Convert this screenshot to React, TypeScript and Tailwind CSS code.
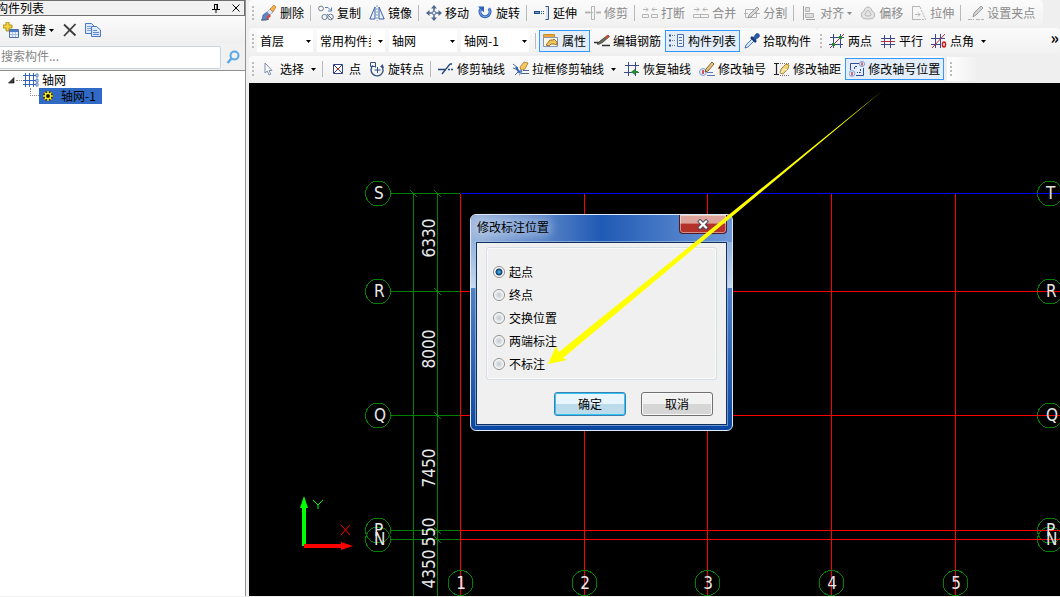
import { useState, type ReactNode } from "react";

/* ---------- icons (16 x 16) ---------- */

function Svg({ children, className = "" }: { children: ReactNode; className?: string }) {
  return (
    <svg viewBox="0 0 16 16" fill="none" aria-hidden="true" className={`size-4 shrink-0 ${className}`}>
      {children}
    </svg>
  );
}

const NAVY = "#3a4a86";
const STEEL = "#5a7fb5";
const GREY = "#b4b4b4";

const DeleteIcon = () => (
  <Svg>
    <path d="M0 15h5l3-1" stroke="#555" />
    <path d="M2 10l4-3 3 3-3 4-5 1z" fill="#5b86c8" stroke="#2c4f93" strokeWidth=".6" />
    <path d="M6 7l3-3 3 3-3 3z" fill="#d9e4f4" stroke="#7d8fae" strokeWidth=".6" />
    <path d="M9 4l4-4 2 2-3 5z" fill="#f2b04a" stroke="#b9661e" strokeWidth=".6" />
    <path d="M8 9l2 2-3 3-2-1z" fill="#d8473a" />
  </Svg>
);
const CopyObjIcon = () => (
  <Svg>
    <circle cx="3" cy="3.5" r="2.4" stroke="#6d7c94" />
    <circle cx="6.5" cy="12" r="2.6" stroke="#6d7c94" />
    <circle cx="12.5" cy="12" r="2.8" stroke="#6d7c94" />
    <path d="M7 2.5h3l3 3M13.500 2.500v3.500h-3.500M9 9l5 5" stroke={STEEL} />
  </Svg>
);
const MirrorIcon = () => (
  <Svg>
    <path d="M6 2v12H.8zM10 2v12h5.200z" fill="#e8f0fb" stroke="#3f62a5" />
    <path d="M8 0v16" stroke="#7d9ac9" strokeDasharray="2 1" />
  </Svg>
);
const MoveIcon = () => (
  <Svg>
    <path d="M8 2v12M2 8h12" stroke="#4d6790" strokeWidth="1.500" />
    <path d="M8 0l3 3.500H5zM8 16l3-3.500H5zM0 8l3.500-3v6zM16 8l-3.500-3v6z" fill="#4d6790" />
    <path d="M6.500 6.500h3v3h-3z" fill="#dfe8f5" stroke="#4d6790" strokeWidth=".6" />
  </Svg>
);
const RotateIcon = () => (
  <Svg>
    <path d="M4.200 3.500a5 5 0 1 0 7.600 0" stroke="#2f62bb" strokeWidth="3" />
    <path d="M4.200 3.500a5 5 0 1 0 7.600 0" stroke="#7ea6e4" strokeWidth="1" />
    <path d="M1 1.500h6v6z" fill="#2f62bb" />
  </Svg>
);
const ExtendIcon = () => (
  <Svg>
    <path d="M0 7.500h6" stroke="#1f4a86" strokeWidth="3" />
    <path d="M1 7.500h4" stroke="#6f97d0" />
    <path d="M7 6.500h4M7 8.500h4" stroke="#1f4a86" strokeDasharray="1 1" />
    <path d="M11.500 1.500h3v13h-3" stroke="#33588f" />
    <path d="M13 2v12" stroke="#b9cdea" />
  </Svg>
);
const TrimIcon = () => (
  <Svg>
    <path d="M0 7.500h5M11 7.500h5" stroke={GREY} strokeWidth="2" />
    <path d="M6.500 1.500h3v13h-3z" stroke={GREY} />
    <path d="M5 7.500h6" stroke={GREY} strokeDasharray="1 1" />
  </Svg>
);
const BreakIcon = () => (
  <Svg>
    <path d="M1 4.500h5m-2-2l2 2-2 2M15 4.500h-5m2-2l-2 2 2 2" stroke={GREY} />
    <path d="M.5 9.500h6v3h-6zM9.500 9.500h6v3h-6z" stroke={GREY} />
  </Svg>
);
const JoinIcon = () => (
  <Svg>
    <path d="M1 4.500h5m-2-2l2 2-2 2M15 4.500h-5m2-2l-2 2 2 2" stroke={GREY} />
    <path d="M.5 9.500h15v3H.5zM7.500 9.500v3" stroke={GREY} />
  </Svg>
);
const SplitIcon = () => (
  <Svg>
    <path d="M1.500 4.500h11v8h-11zM0 8.500h4M9 8.500h7" stroke={GREY} />
    <path d="M4 13l1-3 8-8 2 2-8 8z" fill="#d8d8d8" stroke="#9c9c9c" />
  </Svg>
);
const AlignIcon = () => (
  <Svg>
    <path d="M2.500 1v14M5 14.500h9" stroke="#9c9c9c" />
    <path d="M4.500 2.500h4v4h-4zM4.500 8.500h8v4h-8z" fill="#dedede" stroke={GREY} />
  </Svg>
);
const OffsetIcon = () => (
  <Svg>
    <path d="M8 2c3 0 3.500 3 4 4 2 1 3 2.500 2.500 5-.5 2.500-3 3-6.500 3s-6-.5-6.500-3C1 8.500 2 7 4 6c.5-1 1-4 4-4z" fill="#e4e4e4" stroke={GREY} />
    <path d="M8 5.500c1.500 0 2 2 2.500 3 1 .5 1 2.500-2.500 2.500S4.500 9 5.500 8.500c.5-1 1-3 2.500-3z" stroke={GREY} />
  </Svg>
);
const StretchIcon = () => (
  <Svg>
    <path d="M9 1.500H1.500v13H8" stroke={GREY} />
    <path d="M8 14.500h6.500L9 2" stroke={GREY} strokeDasharray="2 1" />
    <path d="M4 9.500h5m-2-2l2 2-2 2" stroke={GREY} />
  </Svg>
);
const GripPointIcon = () => (
  <Svg>
    <path d="M0 14.500h6M8 14.500h8" stroke={GREY} strokeDasharray="4 1" />
    <path d="M5 12l1-4 7-7 2 2-7 7z" fill="#d2d2d2" stroke="#9c9c9c" />
  </Svg>
);
const PropsIcon = () => (
  <Svg>
    <path d="M.5 1.500h11v3H.5z" fill="#fff" stroke="#c58c2a" />
    <path d="M1 2h10v2H1z" fill="#f0a637" />
    <path d="M.5 4.500h14v9H.5z" fill="#fdf7e6" stroke="#8296b5" />
    <path d="M3 12l4-5h3l1-1 3 3v3l-3-1H8l-2 2z" fill="#f1c658" stroke="#7c5a1b" strokeWidth=".8" />
  </Svg>
);
const EditRebarIcon = () => (
  <Svg>
    <path d="M0 9.500h5M8 12.500h8" stroke="#333" strokeWidth="1.300" />
    <path d="M3 11l3-3 8-6 1.500 1.500-7 6-4 2z" fill="#6b6a55" stroke="#333" strokeWidth=".7" />
    <path d="M11 4.500L14 2l1.500 1.500-3 2.500z" fill="#d44a34" />
  </Svg>
);
const ListIcon = () => (
  <Svg>
    <path d="M0 2.500h2M0 7.500h2M0 12.500h2" stroke="#2c4f93" strokeWidth="2" />
    <path d="M3 2.500h4M3 7.500h4M3 12.500h4" stroke="#777" strokeDasharray="1 1" />
    <path d="M8.500 1.500h6v12h-6z" fill="#eef3fb" stroke="#4b6fae" />
    <path d="M10 4.500h3M10 7.500h3M10 10.500h3" stroke="#4b6fae" />
  </Svg>
);
const PickIcon = () => (
  <Svg>
    <path d="M1 15l1-3 6-6 2 2-6 6z" fill="#dbe9fa" stroke="#4576b8" />
    <path d="M7 4l5 5" stroke="#173a78" strokeWidth="2.500" />
    <path d="M9 5l3-4c2-1.500 4.500 1 3 3l-4 3z" fill="#2c5cab" stroke="#173a78" strokeWidth=".7" />
  </Svg>
);
const TwoPointIcon = () => (
  <Svg>
    <path d="M4.500 1v14M11.500 1v14M1 4.500h14M0 11.500h14" stroke={NAVY} />
    <path d="M1 15L15 1" stroke="#b5283a" />
    <path d="M3 10h3v3H3zM10 3h3v3h-3z" fill="#2b8a2b" />
  </Svg>
);
const ParallelIcon = () => (
  <Svg>
    <path d="M4.500 2v13M10.500 2v13M1 11.500h14" stroke={NAVY} />
    <path d="M1 5.500h14" stroke={NAVY} />
    <path d="M1 8.500h14" stroke="#c02a3c" />
  </Svg>
);
const PointAngleIcon = () => (
  <Svg>
    <path d="M4.500 1v14M9.500 1v14M0 5.500h14M0 11.500h10" stroke={NAVY} />
    <path d="M1 15L14 1" stroke="#c02a3c" />
    <ellipse cx="13" cy="11.500" rx="1.600" ry="2.500" stroke="#d01818" strokeWidth="1.400" />
  </Svg>
);
const CursorIcon = () => (
  <Svg>
    <path d="M4 2v10l2.300-2 1.700 4 1.700-.8L8 9.500h3z" fill="#fff" stroke="#7d8fae" />
  </Svg>
);
const PointIcon = () => (
  <Svg>
    <path d="M3.500 3.500h9v9h-9z" fill="#fff" stroke="#2f3f88" />
    <path d="M4 4l8 8M12 4l-8 8" stroke="#2f3f88" />
    <path d="M7 7h2v2H7z" fill="#d01818" />
  </Svg>
);
const RotatePointIcon = () => (
  <Svg>
    <path d="M4 4.500a6 6 0 1 0 9 1" stroke="#33507f" strokeWidth="1.400" />
    <path d="M1.500 1.500h5v5M1.500 1.500v4h5" stroke="#33507f" />
    <path d="M8.500 6v6M5.500 9h6" stroke="#33507f" />
    <path d="M11 6l2.500-3L15 7z" fill="#33507f" />
  </Svg>
);
const TrimAxisIcon = () => (
  <Svg>
    <path d="M0 8.500h8M4 13L12 3" stroke="#24467c" strokeWidth="1.300" />
    <path d="M10 8.500h6M12 3h3" stroke="#24467c" strokeWidth="1.300" strokeDasharray="2 1" />
  </Svg>
);
const TrimBoxIcon = () => (
  <Svg>
    <path d="M0 3l5 4M0 7l5 2M2 14l4-4M10 9.500h6M8 12.500h8" stroke="#4a6490" />
    <path d="M3 6l3 5 3-1" stroke="#2f62bb" strokeWidth="2" />
    <path d="M7 6l4-5 4 1-3 6-4 1z" fill="#f5c85c" stroke="#a8742a" strokeWidth=".8" />
    <path d="M7 9l-1 6 3-4z" fill="#6b8cc0" />
  </Svg>
);
const RestoreIcon = () => (
  <Svg>
    <path d="M4.500 1v14M11.500 1v14M1 4.500h14M0 11.500h15" stroke={NAVY} />
    <path d="M7 11l4-3v2h3v2h-3v2z" fill="#1f8f2b" />
  </Svg>
);
const AxisNumIcon = () => (
  <Svg>
    <circle cx="4" cy="11" r="3.500" fill="#dce8fa" stroke="#86a3d6" />
    <path d="M4 9v4" stroke="#d01818" strokeWidth="1.400" />
    <path d="M8 14.500h8M8 11.500h6" stroke="#5c79b5" />
    <path d="M6 11l1-3 6-7 2 2-6 7z" fill="#eac27c" stroke="#6b4a22" strokeWidth=".8" />
  </Svg>
);
const AxisDistIcon = () => (
  <Svg>
    <path d="M0 2.500h5M2.500 2.500v11M0 13.500h5" stroke="#222" strokeWidth="1.200" />
    <path d="M6 2.500h10M6 14.500h10" stroke="#777" strokeDasharray="1 1" />
    <path d="M6 12l1-4 5-5 3 1-1 4-5 5z" fill="#f2d173" stroke="#9a762c" strokeWidth=".8" />
    <path d="M7 12l3-4 3 1" stroke="#fff" />
  </Svg>
);
const AxisPosIcon = () => (
  <Svg>
    <path d="M1.500 9V2.500H10M14.500 7v7.500H7" stroke="#2c4f93" />
    <path d="M5.500 8V5.500H9M11.500 8v3.500H8" stroke="#2c4f93" strokeDasharray="2 1" />
    <circle cx="13" cy="3" r="2.600" fill="#dce8fa" stroke="#86a3d6" />
    <circle cx="3" cy="12.500" r="2.900" fill="#dce8fa" stroke="#86a3d6" />
    <path d="M13 1.500v3M3 11v3.500" stroke="#d01818" strokeWidth="1.200" />
  </Svg>
);
const NewIcon = () => (
  <Svg className="mr-px">
    <path d="M6.500 7.500h9v8h-9z" fill="#e9f1fc" stroke="#4d6fa8" />
    <path d="M7 8h8v2H7z" fill="#4f7fca" />
    <path d="M7 12.500h8M9.500 10v5M12.500 10v5" stroke="#a8c0e4" />
    <path d="M3 0h3v3h3v3H6v3H3V6H0V3h3z" fill="#f4d43c" stroke="#a58312" strokeWidth=".8" />
  </Svg>
);
const CrossIcon = () => (
  <Svg>
    <path d="M2 2.500l11.500 11M13.500 2L2 14" stroke="#3c3c3c" strokeWidth="1.800" />
  </Svg>
);
const CopyPagesIcon = () => (
  <Svg>
    <path d="M.5 1.500h6l3 3v7h-9z" fill="#dfeafa" stroke="#4878be" />
    <path d="M2 4.500h4M2 6.500h4M2 8.500h4" stroke="#7fa3da" />
    <path d="M6.500 4.500h5l4 3.500v6.500h-9z" fill="#dfeafa" stroke="#4878be" />
    <path d="M8 8.500h4M8 10.500h6M8 12.500h6" stroke="#5b88cc" />
  </Svg>
);
const SearchIcon = () => (
  <Svg>
    <circle cx="9.500" cy="6.500" r="4" stroke="#5aa7e8" strokeWidth="2" />
    <path d="M6.500 9.500L2.500 14" stroke="#5aa7e8" strokeWidth="2.500" />
  </Svg>
);
const GridIcon = () => (
  <Svg>
    <path d="M2.500 1v14M6.500 1v14M10.500 1v14M0 3.500h13M0 8.500h13M0 12.500h13" stroke="#3464bd" />
    <path d="M13 2h2v3h-2zM13 7h2v3h-2zM13 11h2v3h-2z" stroke="#3464bd" strokeWidth=".8" />
  </Svg>
);
const GearIcon = () => (
  <Svg>
    <path d="M8 3v10M3 8h10M4.500 4.500l7 7M11.500 4.500l-7 7" stroke="#141400" strokeWidth="3" />
    <path d="M8 3v10M3 8h10M4.500 4.500l7 7M11.500 4.500l-7 7" stroke="#ffee1c" strokeWidth="1.500" />
    <circle cx="8" cy="8" r="2.600" fill="#141400" stroke="#ffee1c" strokeWidth="1.400" />
  </Svg>
);

/* ---------- toolbar parts ---------- */

function Caret({ off = false, className = "" }: { off?: boolean; className?: string }) {
  return (
    <svg viewBox="0 0 5 3" aria-hidden="true" className={`h-[3px] w-[5px] shrink-0 ${className}`}>
      <path d="M0 0h5L2.500 3z" fill={off ? "#8a8a8a" : "#000"} />
    </svg>
  );
}

function Grip() {
  return (
    <span className="mx-[3px] flex shrink-0 flex-col gap-0.5" aria-hidden="true">
      <i className="size-0.5 bg-[#bcbcbc]" />
      <i className="size-0.5 bg-[#bcbcbc]" />
      <i className="size-0.5 bg-[#bcbcbc]" />
      <i className="size-0.5 bg-[#bcbcbc]" />
    </span>
  );
}

const Sep = () => <span className="mr-[3px] ml-0.5 h-4 w-px shrink-0 bg-[#b9b9b9]" aria-hidden="true" />;

type ToolProps = { icon: ReactNode; label: string; off?: boolean; on?: boolean; menu?: boolean };

function Tool({ icon, label, off, on, menu }: ToolProps) {
  return (
    <button
      type="button"
      disabled={off}
      aria-pressed={on ? true : undefined}
      className={`flex h-[22px] shrink-0 items-center gap-[3px] border px-[3px] whitespace-nowrap ${
        on ? "border-[#3399ff] bg-[#e3eefa]" : "border-transparent"
      } ${off ? "text-[#8b8b8b]" : "text-black"}`}
    >
      {icon}
      <span>{label}</span>
      {menu && <Caret off={off} className={off ? "" : "ml-1"} />}
    </button>
  );
}

function Combo({ name, value, width }: { name: string; value: string; width: string }) {
  return (
    <span className={`relative mr-1 flex h-[22px] shrink-0 items-center bg-white ${width}`}>
      <select
        aria-label={name}
        defaultValue={value}
        className="h-full w-full appearance-none bg-transparent pr-3.5 pl-[3px] text-xs text-black outline-none"
      >
        <option>{value}</option>
      </select>
      <span className="pointer-events-none absolute top-0 right-0 flex h-full items-center bg-white px-0.5">
        <Caret />
      </span>
    </span>
  );
}

const strip = "flex h-[26px] items-center rounded-sm bg-linear-to-b from-[#fbfbfb] to-[#f1f1f1]";

function Toolbars() {
  return (
    <header className="flex h-[83px] flex-col gap-px overflow-hidden bg-[#efefef]">
      <div className="flex">
        <div className={`${strip} pr-1`}>
          <Grip />
          <Tool icon={<DeleteIcon />} label="删除" />
          <Sep />
          <Tool icon={<CopyObjIcon />} label="复制" />
          <Tool icon={<MirrorIcon />} label="镜像" />
          <Sep />
          <Tool icon={<MoveIcon />} label="移动" />
          <Tool icon={<RotateIcon />} label="旋转" />
          <Sep />
          <Tool icon={<ExtendIcon />} label="延伸" />
          <Tool icon={<TrimIcon />} label="修剪" off />
          <Sep />
          <Tool icon={<BreakIcon />} label="打断" off />
          <Tool icon={<JoinIcon />} label="合并" off />
          <Tool icon={<SplitIcon />} label="分割" off />
          <Sep />
          <Tool icon={<AlignIcon />} label="对齐" off menu />
          <Tool icon={<OffsetIcon />} label="偏移" off />
          <Tool icon={<StretchIcon />} label="拉伸" off />
          <Sep />
          <Tool icon={<GripPointIcon />} label="设置夹点" off />
        </div>
      </div>

      <div className="flex h-7 items-center">
        <div className={`${strip} pr-0.5`}>
          <Grip />
          <Combo name="楼层" value="首层" width="w-14" />
          <Combo name="构件类型" value="常用构件类型" width="w-[68px]" />
          <Combo name="构件" value="轴网" width="w-[68px]" />
          <Combo name="构件名称" value="轴网-1" width="w-[68px]" />
          <Sep />
          <Tool icon={<PropsIcon />} label="属性" on />
          <Tool icon={<EditRebarIcon />} label="编辑钢筋" />
          <Tool icon={<ListIcon />} label="构件列表" on />
          <Tool icon={<PickIcon />} label="拾取构件" />
        </div>
        <div className={`${strip} flex-1`}>
          <Grip />
          <Tool icon={<TwoPointIcon />} label="两点" />
          <Tool icon={<ParallelIcon />} label="平行" />
          <Tool icon={<PointAngleIcon />} label="点角" menu />
          <button type="button" aria-label="更多" className="mr-px mb-2 ml-auto text-base leading-4 font-bold">
            »
          </button>
        </div>
      </div>

      <div className="flex items-center gap-[3px]">
        <div className={strip}>
          <Grip />
          <Tool icon={<CursorIcon />} label="选择" menu />
          <Sep />
          <Tool icon={<PointIcon />} label="点" />
          <Tool icon={<RotatePointIcon />} label="旋转点" />
          <Sep />
          <Tool icon={<TrimAxisIcon />} label="修剪轴线" />
          <Tool icon={<TrimBoxIcon />} label="拉框修剪轴线" menu />
          <Tool icon={<RestoreIcon />} label="恢复轴线" />
          <Tool icon={<AxisNumIcon />} label="修改轴号" />
          <Tool icon={<AxisDistIcon />} label="修改轴距" />
          <Tool icon={<AxisPosIcon />} label="修改轴号位置" on />
        </div>
        <div className="flex h-6 w-[30px] items-center bg-linear-to-r from-white to-[#f0f0f0]">
          <Grip />
        </div>
      </div>
    </header>
  );
}

/* ---------- component list ---------- */

function Sidebar() {
  return (
    <aside className="flex w-[246px] shrink-0 flex-col border-r border-[#8f8f8f] bg-white">
      <div className="flex h-4 items-center border-y border-r border-[#6f6f6f] bg-[#f1f1f1]">
        <h2 className="-ml-1 flex-1 leading-3">构件列表</h2>
        <button type="button" aria-label="固定" className="mr-3">
          <svg viewBox="0 0 8 9" fill="none" className="h-[9px] w-2">
            <path d="M2 .5h4M2.500 0v5M5.500 0v5M0 5.500h8M4 6v3" stroke="#000" />
            <path d="M5 0v5" stroke="#000" />
          </svg>
        </button>
        <button type="button" aria-label="关闭" className="mr-1">
          <svg viewBox="0 0 8 8" fill="none" className="size-2">
            <path d="M.5.5l7 7M7.500.5l-7 7" stroke="#000" />
          </svg>
        </button>
      </div>

      <div className="flex h-7 items-center bg-linear-to-b from-[#fbfbfb] to-[#efefef] pl-[3px]">
        <button type="button" className="flex items-center gap-0.5">
          <NewIcon />
          <span>新建</span>
          <Caret className="ml-px" />
        </button>
        <button type="button" aria-label="删除构件" className="ml-2">
          <CrossIcon />
        </button>
        <button type="button" aria-label="复制构件" className="ml-[7px]">
          <CopyPagesIcon />
        </button>
      </div>

      <div className="flex h-[27px] items-center border-b border-[#8f8f8f] bg-[#f1f1f1]">
        <input
          type="text"
          aria-label="搜索构件"
          placeholder="搜索构件..."
          className="h-[23px] min-w-0 flex-1 rounded-r-xs border border-l-0 border-[#c9d3de] bg-white pb-[3px] pl-px text-xs outline-none placeholder:text-[#858585]"
        />
        <button type="button" aria-label="搜索" className="mr-1 ml-1">
          <SearchIcon />
        </button>
      </div>

      <ul role="tree" aria-label="构件" className="flex-1">
        <li role="treeitem" aria-expanded="true">
          <div className="flex h-[17px] items-center pt-px pl-2">
            <svg viewBox="0 0 7 7" aria-hidden="true" className="size-[7px]">
              <path d="M6 .5V6H.5z" fill="#404040" stroke="#000" strokeWidth=".6" />
            </svg>
            <span className="mx-px w-1.5 border-t border-dotted border-[#8a8a8a]" />
            <GridIcon />
            <span className="ml-[3px]">轴网</span>
          </div>
          <ul role="group">
            <li role="treeitem" aria-selected="true" className="flex h-4 pl-[30px]">
              <span className="h-2 w-[9px] border-b border-l border-dotted border-[#8a8a8a]" />
              <span className="flex items-center gap-[5px] bg-[#316ac5] pr-1.5 pl-px">
                <GearIcon />
                <span>轴网-1</span>
              </span>
            </li>
          </ul>
        </li>
      </ul>
    </aside>
  );
}

/* ---------- drawing ---------- */

const rows = [
  { y: 110, left: "S", right: "T" },
  { y: 208, left: "R", right: "R" },
  { y: 332, left: "Q", right: "Q" },
  { y: 447, left: "P", right: "P" },
  { y: 456, left: "N", right: "N" },
];
const columns = [
  { x: 211, name: "1" },
  { x: 335, name: "2" },
  { x: 458, name: "3" },
  { x: 582, name: "4" },
  { x: 706, name: "5" },
];
const spans = [
  { y: 155, text: "6330" },
  { y: 266, text: "8000" },
  { y: 385, text: "7450" },
  { y: 449, text: "550" },
  { y: 486, text: "4350" },
];

function Drawing() {
  return (
    <svg className="absolute inset-0 h-full w-full" aria-label="轴网">
      <g fill="none" stroke="#008000" shapeRendering="crispEdges">
        <path d="M164.500 110V600M188.500 110V600" />
        {rows.map((r) => (
          <g key={r.y}>
            <path d={`M142 ${r.y + 0.5}H211M185 ${r.y - 3}l7 7`} />
            <circle cx="129" cy={r.y + 0.5} r="12.500" />
            <circle cx="801" cy={r.y + 0.5} r="12.500" />
          </g>
        ))}
        <path d="M161 107l7 7" />
      </g>
      <g stroke="#ff0000" shapeRendering="crispEdges">
        {columns.map((c) => (
          <path key={c.x} d={`M${c.x + 0.5} 111V600`} />
        ))}
        {rows.slice(1).map((r) => (
          <path key={r.y} d={`M212 ${r.y + 0.5}H4000`} />
        ))}
        <path d="M212 110.500H4000" stroke="#0000ff" />
      </g>
      <g fill="none" stroke="#008000" shapeRendering="crispEdges">
        {columns.map((c) => (
          <circle key={c.x} cx={c.x + 0.5} cy="500" r="12.500" />
        ))}
      </g>
      <g
        fill="#e8e8e8"
        fontSize="17"
        className="font-['DejaVu_Sans_Condensed','Noto_Sans',sans-serif]"
      >
        {rows.map((r) => (
          <g key={r.y}>
            <text x="125" y={r.y + 6}>{r.left}</text>
            <text x="797" y={r.y + 6}>{r.right}</text>
          </g>
        ))}
        <g textAnchor="middle">
          {columns.map((c) => (
            <text key={c.x} x={c.x + 1} y="506">{c.name}</text>
          ))}
          {spans.map((s) => (
            <text key={s.y} transform={`translate(186 ${s.y}) rotate(-90)`}>{s.text}</text>
          ))}
        </g>
      </g>
      <path d="M53 425h4v38h-4z" fill="#00ff00" />
      <path d="M55 413l4 12h-8z" fill="#00ff00" />
      <path d="M55 461h37v4H55z" fill="#ff0000" />
      <path d="M104 463l-12-4v8z" fill="#ff0000" />
      <path d="M64 417l5 5 5-5M69 422v4" fill="none" stroke="#00ff00" />
      <path d="M92 442l9 10M101 442l-9 10" fill="none" stroke="#ff0000" />
    </svg>
  );
}

/* ---------- dialog ---------- */

const choices = ["起点", "终点", "交换位置", "两端标注", "不标注"];

function PositionDialog() {
  const [choice, setChoice] = useState(choices[0]);
  return (
    <section
      role="dialog"
      aria-labelledby="dlg-title"
      className="absolute top-[131px] left-[221px] flex w-[263px] flex-col rounded-md border border-[#dce9f8] bg-linear-to-b from-[#6f9bd8] via-[#3f74bd] to-[#0a47a2] px-[5px] pb-[5px]"
    >
      <div className="pointer-events-none absolute inset-0 rounded-md bg-linear-to-b from-white/10 from-0% via-white/70 via-34% to-transparent to-34%" />
      <div className="absolute inset-x-0 top-0 h-[27px] rounded-t-md bg-linear-to-r from-[#9bb5dc] via-[#1f5ab4] via-50% to-[#6d98d8]" />
      <div className="relative flex h-[27px] items-start justify-between">
        <h2
          id="dlg-title"
          className="mt-1 rounded-md bg-white/20 px-px leading-4 shadow-[0_0_6px_3px_rgba(255,255,255,0.2)]"
        >
          修改标注位置
        </h2>
        <button
          type="button"
          aria-label="关闭"
          className="flex h-[19px] w-12 items-center justify-center rounded-b-[4px] border border-t-0 border-[#4b1d26] bg-linear-to-b from-[#dca49c] from-45% to-[#b3322b] to-50% shadow-[inset_0_0_0_1px_rgba(255,255,255,0.45)]"
        >
          <svg viewBox="0 0 12 11" fill="none" className="h-[11px] w-3">
            <path d="M3 2.500l6 6M9 2.500l-6 6" stroke="#4a4a5a" strokeWidth="4" strokeLinecap="square" />
            <path d="M3 2.500l6 6M9 2.500l-6 6" stroke="#fff" strokeWidth="2.200" strokeLinecap="square" />
          </svg>
        </button>
      </div>

      <form
        className="relative border border-[#12305e] bg-[#f0f0f0] px-[9px] pt-1 pb-2 outline outline-[#a9c6ea]/60"
        onSubmit={(e) => e.preventDefault()}
      >
        <fieldset
          aria-label="标注位置"
          className="flex flex-col gap-[7px] rounded-[3px] border border-[#d5dfe5] px-1.5 pt-4 pb-[7px] shadow-[inset_0_0_0_1px_#fafafa]"
        >
          {choices.map((c) => (
            <label key={c} className="flex h-4 items-center gap-1">
              <input
                type="radio"
                name="position"
                checked={choice === c}
                onChange={() => setChoice(c)}
                className="size-3 shrink-0 appearance-none rounded-full border border-[#8e8f8f] bg-[radial-gradient(circle,#c4c9ce_0,#dfe3e6_3px,#fff_5px)] checked:bg-[radial-gradient(circle_at_50%_50%,#5cc3f2_0,#1b6ca8_2px,#123a63_3px,#fff_4px)]"
              />
              <span>{c}</span>
            </label>
          ))}
        </fieldset>
        <div className="mt-3 flex justify-end gap-[15px] pr-1">
          <button
            type="submit"
            className="h-6 w-[72px] rounded-[3px] border border-[#3c7fb1] bg-linear-to-b from-[#e8f5fc] from-50% to-[#bcdcec] to-50% shadow-[inset_0_0_0_1px_#2fc6f5]"
          >
            确定
          </button>
          <button
            type="button"
            className="h-6 w-[72px] rounded-[3px] border border-[#707070] bg-linear-to-b from-[#f2f2f2] from-50% to-[#d6d6d6] to-50% shadow-[inset_0_0_0_1px_#f8f8f8]"
          >
            取消
          </button>
        </div>
      </form>
    </section>
  );
}

export default function App() {
  return (
    <div className="flex min-h-screen bg-[#f0f0f0] pb-px font-['Noto_Sans_CJK_SC',sans-serif] text-xs leading-4 text-black">
      <Sidebar />
      <div className="ml-[3px] flex min-w-0 flex-1 flex-col">
        <Toolbars />
        <main className="relative flex-1 overflow-hidden bg-black">
          <Drawing />
          <PositionDialog />
          <svg className="pointer-events-none absolute inset-0 h-full w-full" aria-hidden="true">
            <path d="M633 8L310 269L307 263L299 281L318 277L314 275Z" fill="#ffff00" />
          </svg>
        </main>
      </div>
    </div>
  );
}
